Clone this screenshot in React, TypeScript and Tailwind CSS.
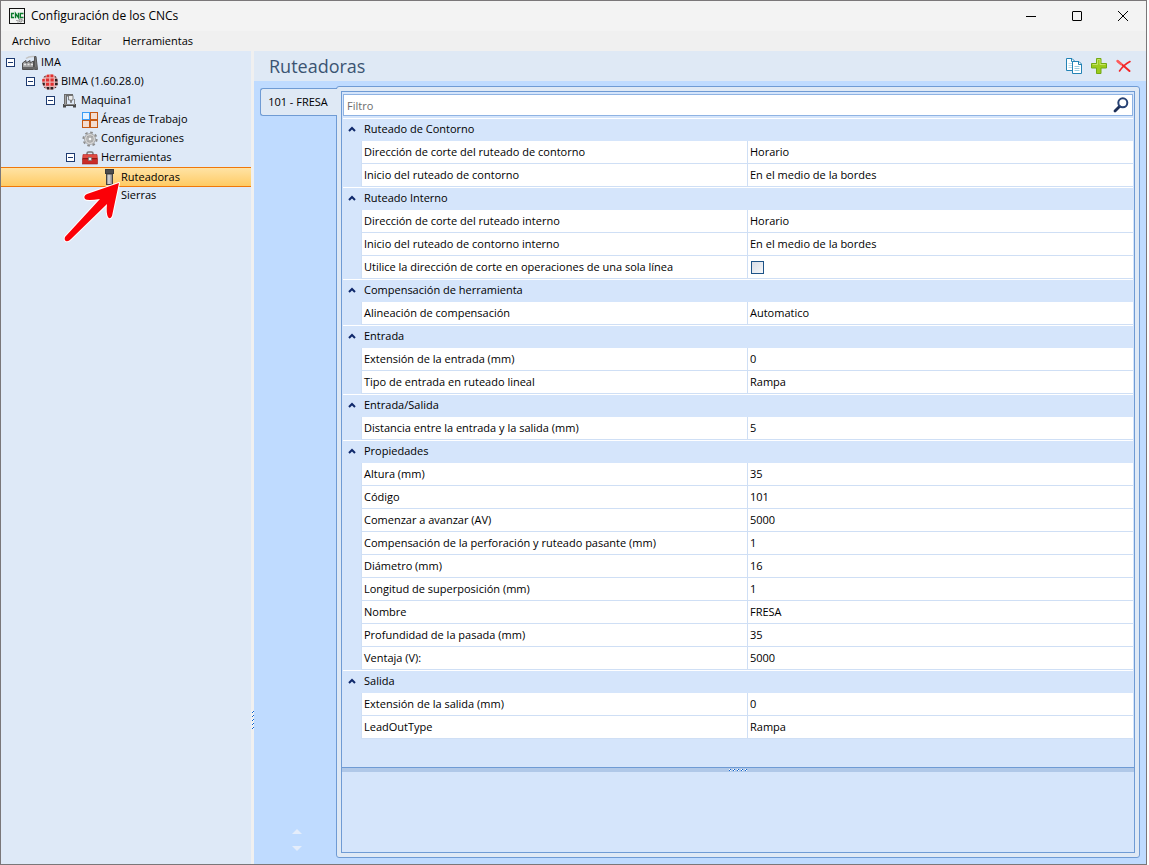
import React from 'react';

type Item = { name: string; value: string | boolean };
type Category = { title: string; items: Item[] };

const categories: Category[] = [
  {
    title: 'Ruteado de Contorno',
    items: [
      { name: 'Dirección de corte del ruteado de contorno', value: 'Horario' },
      { name: 'Inicio del ruteado de contorno', value: 'En el medio de la bordes' },
    ],
  },
  {
    title: 'Ruteado Interno',
    items: [
      { name: 'Dirección de corte del ruteado interno', value: 'Horario' },
      { name: 'Inicio del ruteado de contorno interno', value: 'En el medio de la bordes' },
      { name: 'Utilice la dirección de corte en operaciones de una sola línea', value: false },
    ],
  },
  {
    title: 'Compensación de herramienta',
    items: [{ name: 'Alineación de compensación', value: 'Automatico' }],
  },
  {
    title: 'Entrada',
    items: [
      { name: 'Extensión de la entrada (mm)', value: '0' },
      { name: 'Tipo de entrada en ruteado lineal', value: 'Rampa' },
    ],
  },
  {
    title: 'Entrada/Salida',
    items: [{ name: 'Distancia entre la entrada y la salida (mm)', value: '5' }],
  },
  {
    title: 'Propiedades',
    items: [
      { name: 'Altura (mm)', value: '35' },
      { name: 'Código', value: '101' },
      { name: 'Comenzar a avanzar (AV)', value: '5000' },
      { name: 'Compensación de la perforación y ruteado pasante (mm)', value: '1' },
      { name: 'Diámetro (mm)', value: '16' },
      { name: 'Longitud de superposición (mm)', value: '1' },
      { name: 'Nombre', value: 'FRESA' },
      { name: 'Profundidad de la pasada (mm)', value: '35' },
      { name: 'Ventaja (V):', value: '5000' },
    ],
  },
  {
    title: 'Salida',
    items: [
      { name: 'Extensión de la salida (mm)', value: '0' },
      { name: 'LeadOutType', value: 'Rampa' },
    ],
  },
];

function AppIcon() {
  return (
    <svg className="h-4 w-4 shrink-0" viewBox="0 0 16 16">
      <rect x="0.5" y="0.5" width="15" height="15" fill="#f4f6f4" stroke="#111" />
      <g fill="none" stroke="#0b7a2b" strokeWidth="1.4">
        <path d="M5 5.5H2.6v4H5" />
        <path d="M6.5 10.2V5.5L9.500 9.600V4.800" />
        <path d="M14.500 5.500h-3.200v4h3.200" />
      </g>
      <circle cx="11.5" cy="12.5" r="1.6" fill="#ccc" stroke="#888" />
      <path d="M7 12.5h2M8 14h2M13.5 11.5l1 2" stroke="#aaa" />
    </svg>
  );
}

function FactoryIcon() {
  return (
    <svg className="h-4 w-4 shrink-0" viewBox="0 0 16 16">
      <path d="M0.5 14.5V8L4 5.5v2.500L8 5.500v2.500L11.500 6V14.500Z" fill="#a2a2a2" stroke="#4f4f4f" />
      <path d="M12.500 14.500V1.500h1.500L15.500 14.500Z" fill="#777" stroke="#555" />
      <path d="M4 3.500Q7 1 12 1.500" fill="none" stroke="#c4c4c4" strokeWidth="1.500" />
      <path d="M2 9.500h2M5.500 9.500h2M9 9.500h2" stroke="#e8e8e8" strokeWidth="1.500" />
      <path d="M1 13h14" stroke="#666" strokeWidth="2" />
    </svg>
  );
}

function BimaIcon() {
  return (
    <svg className="h-4 w-4 shrink-0" viewBox="0 0 16 16">
      <circle cx="8" cy="8" r="8" fill="#e9b3b3" />
      <path
        d="M5 .7h2.300v2.600H4.200zM8.500.5h2.800v2.800H8.500zM4 4.500h3.200v3H4zM8.500 4.500h3.200v3H8.500zM4 8.700h3.200v3H4zM8.500 8.700h3.200v3H8.500zM.3 5h2.500v2.500H.2z"
        fill="#e03030"
      />
      <path
        d="M1.600 3.300L3.500 1.500v1.800zM.3 8.700h2.500v2.800H1.200zM1.800 13h1.500v1.500zM12.800 1.700l1.800 1.700h-1.800zM13 4.700h2.300l.4 2.800H13zM12.800 13h1.800l-1.800 1.500zM4.500 13h2.800v2.600H5zM8.500 13h2.800v2.400H8.500zM13 8.700h2.700v2.500H13z"
        fill="#2b2022"
      />
    </svg>
  );
}

function MachineIcon() {
  return (
    <svg className="h-4 w-4 shrink-0" viewBox="0 0 16 16">
      <path d="M2 1h9v2.500H5V11H2z" fill="#6c6c6c" />
      <path d="M3.500 2v9" stroke="#a5a5a5" />
      <path d="M6.500 2.500h4.500V7H9.500v2.500h-1V7h-2z" fill="#ececec" stroke="#666" strokeWidth="0.8" />
      <path d="M12.500 6v5" stroke="#8a8a8a" />
      <path d="M1 11h13v3.500h-3V13H4v1.500H1z" fill="#4a4a4a" />
      <path d="M2 11.500h11" stroke="#8a8a8a" />
    </svg>
  );
}

function AreasIcon() {
  return (
    <svg className="h-4 w-4 shrink-0" viewBox="0 0 16 16" strokeWidth="1">
      <rect x="8.500" y="0.500" width="7" height="7" fill="#f4ddd0" stroke="#c85a14" />
      <rect x="0.500" y="8.500" width="7" height="7" fill="#f4ddd0" stroke="#c85a14" />
      <rect x="8.500" y="8.500" width="7" height="7" fill="#f4ddd0" stroke="#c85a14" />
      <rect x="0.500" y="0.500" width="7" height="7" fill="#e6f3ff" stroke="#3b9cf5" />
    </svg>
  );
}

function GearIcon() {
  return (
    <svg className="h-4 w-4 shrink-0" viewBox="0 0 16 16" fill="none">
      <circle cx="8" cy="8" r="6.700" stroke="#8d8d8d" strokeWidth="1.800" strokeDasharray="2.630 2.630" />
      <circle cx="8" cy="8" r="4.300" fill="#ddd" stroke="#8d8d8d" strokeWidth="3" />
      <circle cx="8" cy="8" r="4.300" stroke="#d2d2d2" strokeWidth="1.800" />
      <circle cx="8" cy="8" r="2" fill="#f7f7f7" stroke="#8d8d8d" strokeWidth="0.800" />
    </svg>
  );
}

function ToolboxIcon() {
  return (
    <svg className="h-4 w-4 shrink-0" viewBox="0 0 16 16">
      <path d="M5 5V3.500Q5 2 6.500 2h3Q11 2 11 3.500V5" fill="none" stroke="#777" strokeWidth="1.500" />
      <path d="M1 4.500h14L15.500 9H.5z" fill="#e04a42" stroke="#b42a25" strokeWidth="0.600" />
      <rect x="0.500" y="9" width="15" height="5" fill="#c92c28" stroke="#9d1c1b" strokeWidth="0.600" />
      <path d="M1 8.500h14" stroke="#8c1a18" />
      <rect x="6.500" y="7.500" width="3" height="3" fill="#eee" stroke="#777" strokeWidth="0.700" />
    </svg>
  );
}

function RouterBitIcon() {
  return (
    <svg className="h-4 w-4 shrink-0" viewBox="0 0 16 16">
      <defs>
        <linearGradient id="steel">
          <stop offset="0" stopColor="#777" />
          <stop offset="0.4" stopColor="#ddd" />
          <stop offset="1" stopColor="#777" />
        </linearGradient>
      </defs>
      <rect x="4.500" y="5" width="6" height="10.500" fill="url(#steel)" stroke="#444" />
      <rect x="3.500" y="0.500" width="8" height="4" fill="#4c4c4c" stroke="#3a3a3a" />
    </svg>
  );
}

function CopyIcon() {
  return (
    <svg className="h-4 w-4" viewBox="0 0 16 16" fill="#fff" stroke="#2383b5">
      <path d="M.5.500H6L8.500 3V12.500H.5z" />
      <path d="M5.500 1v2.500H8" fill="none" />
      <path d="M2.500 5.500h4M2.500 7.500h4M2.500 9.500h4" stroke="#b9dcec" />
      <path d="M6.500 3.500H13L15.500 6V15.500H6.500z" />
      <path d="M12.500 4v2.500H15" fill="none" />
      <path d="M8.500 8.500h5M8.500 10.500h5M8.500 12.500h5" stroke="#9bccdf" />
    </svg>
  );
}

function AddIcon() {
  return (
    <svg className="h-4 w-4" viewBox="0 0 16 16">
      <path d="M5.500.5h4.500v5h5.500V10H10v5.500H5.500V10H.5V5.500h5z" fill="#9ccb1c" stroke="#72a915" />
      <path d="M6.500 1.500H9v5h5.500M1.500 6.500h5v-5" fill="none" stroke="#c5e363" />
    </svg>
  );
}

function DeleteIcon() {
  return (
    <svg className="h-4 w-4" viewBox="0 0 16 16" fill="none" strokeLinecap="round">
      <path d="M2 3.500Q7 7 13.500 13" stroke="#f32626" strokeWidth="2" />
      <path d="M14 3.500Q8 6.500 3.500 13" stroke="#f32626" strokeWidth="1.600" />
      <path d="M1.500 3L5 6" stroke="#ff5c5c" strokeWidth="2.400" />
    </svg>
  );
}

function SearchIcon() {
  return (
    <svg className="h-4 w-4" viewBox="0 0 16 16" fill="none" strokeLinecap="round">
      <path d="M2 14L6.500 9.500" stroke="#1d2f57" strokeWidth="2.800" />
      <circle cx="9.800" cy="5.800" r="4.500" stroke="#274274" strokeWidth="2" />
    </svg>
  );
}

function Chevron() {
  return (
    <svg className="h-[6px] w-2" viewBox="0 0 8 6" fill="none">
      <path d="M1 5L4 2L7 5" stroke="#10296b" strokeWidth="2" />
    </svg>
  );
}

type NodeProps = {
  label: string;
  indent: string;
  icon?: React.ReactNode;
  expandable?: boolean;
  selected?: boolean;
};

function TreeNode({ label, indent, icon, expandable, selected }: NodeProps) {
  return (
    <li
      className={`flex items-center ${indent} ${
        selected
          ? '-mb-px h-5 border-y border-[#f0780a] bg-linear-to-b from-[#ffe3a4] to-[#ffcb62]'
          : 'h-[19px]'
      }`}
    >
      {expandable ? (
        <button
          aria-label={`Contraer ${label}`}
          className="mr-[7px] flex h-[9px] w-[9px] shrink-0 items-center justify-center border border-[#1d3a70] bg-white"
        >
          <span className="h-px w-[5px] bg-[#1d3a70]" />
        </button>
      ) : (
        <span className="mr-[7px] w-[9px] shrink-0" />
      )}
      <span className="mr-[3px] h-4 w-4 shrink-0">{icon}</span>
      <span className="whitespace-nowrap">{label}</span>
    </li>
  );
}

function Sidebar() {
  return (
    <nav className="relative w-[250px] shrink-0 bg-[#dee9f7] pt-[2px]">
      <ul className="text-[11px]">
        <TreeNode label="IMA" indent="pl-[5px]" icon={<FactoryIcon />} expandable />
        <TreeNode label="BIMA (1.60.28.0)" indent="pl-[25px]" icon={<BimaIcon />} expandable />
        <TreeNode label="Maquina1" indent="pl-[45px]" icon={<MachineIcon />} expandable />
        <TreeNode label="Áreas de Trabajo" indent="pl-[65px]" icon={<AreasIcon />} />
        <TreeNode label="Configuraciones" indent="pl-[65px]" icon={<GearIcon />} />
        <TreeNode label="Herramientas" indent="pl-[65px]" icon={<ToolboxIcon />} expandable />
        <TreeNode label="Ruteadoras" indent="pl-[85px]" icon={<RouterBitIcon />} selected />
        <TreeNode label="Sierras" indent="pl-[85px]" />
      </ul>
      {/* red pointer over the selected node */}
      <svg className="absolute top-[128px] left-[60px] h-[68px] w-[64px]" viewBox="0 0 64 68">
        <path
          d="M58 4L26 15Q22 17 24 20Q26 22 39 20L4 58Q3 61 5 62Q7 63 10 60L46 25Q45 34 47 38Q49 41 51 37Z"
          fill="#fff"
          stroke="#fff"
          strokeWidth="2"
          strokeLinejoin="round"
        />
        <path
          d="M58 4L26 15Q22 17 24 20Q26 22 39 20L4 58Q3 61 5 62Q7 63 10 60L46 25Q45 34 47 38Q49 41 51 37Z"
          fill="#fb0007"
        />
      </svg>
    </nav>
  );
}

function PropertyTable() {
  return (
    <table className="w-full table-fixed border-separate border-spacing-0 text-left text-[11px] leading-[22px]">
      <colgroup>
        <col className="w-[18px]" />
        <col />
        <col />
      </colgroup>
      {categories.map((category) => (
        <tbody key={category.title}>
          <tr className="h-[23px] bg-[#d5e5fb] leading-5">
            <th className="border-t border-white p-0 align-top">
              <button aria-label={`Contraer ${category.title}`} className="flex h-5 w-full items-center justify-center">
                <Chevron />
              </button>
            </th>
            <th colSpan={2} className="border-t border-white py-0 pr-0 pl-[3px] align-top font-normal">
              {category.title}
            </th>
          </tr>
          {category.items.map((item) => (
            <tr key={item.name} className="h-[23px] bg-white">
              <td className="bg-[#d5e5fb] p-0" />
              <td className="truncate border-b border-l border-[#cfdff5] py-0 pr-0 pl-[2px]">{item.name}</td>
              <td className="truncate border-b border-l border-[#cfdff5] py-0 pr-0 pl-[2px]">
                {typeof item.value === 'boolean' ? (
                  <input
                    type="checkbox"
                    aria-label={item.name}
                    defaultChecked={item.value}
                    className="ml-px block h-[13px] w-[13px] appearance-none border border-[#1e5387] bg-linear-to-br from-[#d9dde6] to-[#f6f7f9]"
                  />
                ) : (
                  item.value
                )}
              </td>
            </tr>
          ))}
        </tbody>
      ))}
    </table>
  );
}

function Grip({ vertical }: { vertical?: boolean }) {
  return (
    <span className={`flex gap-[2px] ${vertical ? 'flex-col' : ''}`}>
      {[0, 1, 2, 3, 4].map((dot) => (
        <svg key={dot} className="h-[2px] w-[2px]" viewBox="0 0 2 2" shapeRendering="crispEdges">
          <path d="M0 0h2v2H0z" fill="#fff" />
          <path d="M1 0h1v1H1zM0 1h1v1H0z" fill="#0f62cc" />
        </svg>
      ))}
    </span>
  );
}

export default function App() {
  return (
    <div className="h-screen bg-white pr-[2px] font-['Open_Sans','Noto_Sans',sans-serif] text-black">
      <div className="flex h-full flex-col border border-[#7a7779] bg-[#f0f0f0]">
        <header className="flex h-[30px] shrink-0 items-center bg-[#f3f3f3] pl-2">
          <AppIcon />
          <h1 className="ml-[6px] text-[12px]">Configuración de los CNCs</h1>
          <div className="ml-auto flex h-full">
            <button aria-label="Minimizar" className="flex w-[46px] items-center justify-center">
              <span className="h-px w-[10px] bg-black" />
            </button>
            <button aria-label="Maximizar" className="flex w-[46px] items-center justify-center">
              <span className="h-[10px] w-[10px] rounded-[1px] border border-black" />
            </button>
            <button aria-label="Cerrar" className="flex w-[46px] items-center justify-center">
              <svg className="h-[10px] w-[10px]" viewBox="0 0 10 10">
                <path d="M0 0L10 10M10 0L0 10" stroke="#000" />
              </svg>
            </button>
          </div>
        </header>
        <nav className="flex h-5 shrink-0 items-center gap-[21px] pl-[11px] text-[11px]">
          <button>Archivo</button>
          <button>Editar</button>
          <button>Herramientas</button>
        </nav>

        <div className="flex min-h-0 flex-1">
          <Sidebar />
          <div className="flex w-[3px] shrink-0 flex-col items-end justify-end bg-[#f0f0f0] pb-[135px]">
            <Grip vertical />
          </div>

          <main className="flex min-w-0 flex-1 flex-col bg-[#bfdbff]">
            <div className="flex h-[30px] shrink-0 items-center bg-[#dfe9f5] pr-[14px] pl-[15px]">
              <h2 className="text-lg text-[#3b5472]">Ruteadoras</h2>
              <div className="ml-auto flex gap-[9px]">
                <button aria-label="Copiar">
                  <CopyIcon />
                </button>
                <button aria-label="Agregar">
                  <AddIcon />
                </button>
                <button aria-label="Eliminar">
                  <DeleteIcon />
                </button>
              </div>
            </div>

            <div className="flex min-h-0 flex-1 pt-[5px] pr-[6px] pb-[6px] pl-[6px]">
              <div className="z-10 -mr-px flex w-[77px] shrink-0 flex-col pt-[2px]">
                <button className="h-7 rounded-l-[3px] border border-r-0 border-[#6f9bd4] bg-[#dfe9f5] pr-[2px] text-[11px]">
                  101 - FRESA
                </button>
                <div className="mt-auto flex flex-col items-center gap-3 pr-1 pb-[7px]">
                  <button aria-label="Anterior">
                    <svg className="block h-[5px] w-[10px]" viewBox="0 0 10 5">
                      <path d="M5 0L10 5H0z" fill="#e4edfb" />
                    </svg>
                  </button>
                  <button aria-label="Siguiente">
                    <svg className="block h-[5px] w-[10px]" viewBox="0 0 10 5">
                      <path d="M5 5L10 0H0z" fill="#e4edfb" />
                    </svg>
                  </button>
                </div>
              </div>

              <section className="flex min-w-0 flex-1 rounded-[3px] border border-[#6f9bd4] bg-[#dfe9f5] p-1">
                <div className="flex min-w-0 flex-1 flex-col border border-[#6f9bd4] bg-[#d5e5fb]">
                  <div className="min-h-0 flex-1 overflow-hidden px-px pt-[2px]">
                    <div className="mb-[2px] flex h-[22px] items-center border border-[#8fb3e3] bg-white pr-[3px]">
                      <input
                        type="text"
                        aria-label="Filtro"
                        placeholder="Filtro"
                        className="h-full min-w-0 flex-1 px-[3px] text-[11px] outline-none placeholder:text-[#6d6d6d]"
                      />
                      <button aria-label="Buscar">
                        <SearchIcon />
                      </button>
                    </div>
                    <PropertyTable />
                  </div>
                  <div className="flex h-[5px] shrink-0 items-center justify-center border-t border-[#6f9bd4] bg-[#b0c8e8]">
                    <Grip />
                  </div>
                  <div className="h-20 shrink-0" />
                </div>
              </section>
            </div>
          </main>
        </div>
      </div>
    </div>
  );
}
